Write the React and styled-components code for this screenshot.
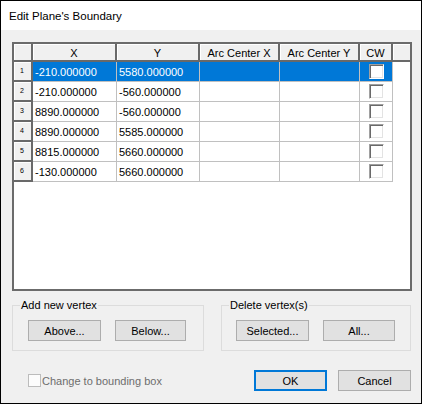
import React from "react";
import styled, { createGlobalStyle, css } from "styled-components";

const Global = createGlobalStyle`
  html, body { margin: 0; padding: 0; background: #fff; }
  * { box-sizing: border-box; }
`;

const FONT = `"Liberation Sans", Arial, sans-serif`;
const DARK = "#696969";

const Window = styled.div`
  width: 422px;
  height: 404px;
  border: 1px solid #000;
  background: #f0f0f0;
  display: flex;
  flex-direction: column;
  font-family: ${FONT};
  color: #000;
`;

const TitleBar = styled.div`
  height: 29px;
  background: #fff;
  display: flex;
  align-items: center;
  padding-left: 8px;
  font-size: 11.5px;
`;

const Body = styled.div`
  flex: 1;
  padding: 12px 0 0 11px;
  display: flex;
  flex-direction: column;
`;

const GridFrame = styled.div`
  width: 400px;
  height: 249px;
  border: 2px solid #6b6b6b;
  background: #fff;
  display: flex;
  flex-direction: column;
`;

const Row = styled.div`
  display: flex;
  height: ${(p) => p.$h}px;
`;

const headerCellBase = css`
  background: #f0f0f0;
  border-right: 2px solid ${DARK};
  border-bottom: 2px solid ${DARK};
  box-shadow: inset 1px 1px 0 #fff;
`;

const HeaderCell = styled.div`
  ${headerCellBase};
  width: ${(p) => p.$w}px;
  height: 18px;
  display: flex;
  align-items: center;
  justify-content: center;
  font-size: 11px;
  padding-top: 1px;
`;

const HeaderFiller = styled.div`
  ${headerCellBase};
  flex: 1;
  height: 18px;
  border-right: none;
`;

const RowHeader = styled.div`
  ${headerCellBase};
  width: 19px;
  height: 20px;
  font-size: 7px;
  line-height: 7px;
  text-align: center;
  padding-top: 5px;
  padding-right: 1px;
`;

const DataCell = styled.div`
  width: ${(p) => p.$w}px;
  height: 20px;
  border-right: 1px solid #c0c0c0;
  border-bottom: 1px solid #c0c0c0;
  background: ${(p) => (p.$sel ? "#0078d7" : "#fff")};
  color: ${(p) => (p.$sel ? "#fff" : "#000")};
  font-size: 11px;
  display: flex;
  align-items: center;
  padding-left: 2px;
  white-space: nowrap;
  overflow: hidden;
`;

const CheckCell = styled(DataCell)`
  justify-content: center;
  padding-left: 0;
`;

const GridCheck = styled.div`
  width: 15px;
  height: 15px;
  background: #fff;
  border-top: 1px solid #a0a0a0;
  border-left: 1px solid #a0a0a0;
  border-right: 1px solid #fff;
  border-bottom: 1px solid #fff;
  box-shadow: inset 1px 1px 0 ${DARK}, inset -1px -1px 0 #e3e3e3;
`;

const Groups = styled.div`
  display: flex;
  gap: 17px;
  margin-top: 14px;
`;

const Group = styled.div`
  position: relative;
  width: ${(p) => p.$w}px;
  border: 1px solid #dcdcdc;
  padding: 14px 0 9px ${(p) => p.$pl}px;
  display: flex;
  gap: 14px;
`;

const GroupLabel = styled.span`
  position: absolute;
  top: -8px;
  left: 7px;
  padding: 0 1px;
  background: #f0f0f0;
  font-size: 11px;
  line-height: 14px;
  white-space: nowrap;
`;

const Button = styled.button`
  width: ${(p) => p.$w || 73}px;
  height: 21px;
  margin: 0;
  padding: 0;
  font-family: ${FONT};
  font-size: 11px;
  color: #000;
  background: #e1e1e1;
  border: 1px solid ${(p) => (p.$default ? "#0078d7" : "#adadad")};
  box-shadow: ${(p) => (p.$default ? "inset 0 0 0 1px #0078d7" : "none")};
`;

const Footer = styled.div`
  display: flex;
  align-items: center;
  margin-top: 19px;
  padding-left: 16px;
  width: 399px;
  gap: 11px;
`;

const CheckLabel = styled.label`
  display: flex;
  align-items: center;
  gap: 1px;
  font-size: 11px;
  color: #6d6d6d;
  margin-right: auto;
`;

const Box = styled.span`
  width: 13px;
  height: 13px;
  border: 1px solid #bcbcbc;
  background: #fcfcfc;
  display: inline-block;
`;

const cols = [
  { label: "X", w: 84 },
  { label: "Y", w: 83 },
  { label: "Arc Center X", w: 80 },
  { label: "Arc Center Y", w: 80 },
];

const rows = [
  ["-210.000000", "5580.000000"],
  ["-210.000000", "-560.000000"],
  ["8890.000000", "-560.000000"],
  ["8890.000000", "5585.000000"],
  ["8815.000000", "5660.000000"],
  ["-130.000000", "5660.000000"],
];

export default function App() {
  return (
    <>
      <Global />
      <Window>
        <TitleBar>Edit Plane's Boundary</TitleBar>
        <Body>
          <GridFrame>
            <Row $h={18}>
              <HeaderCell $w={19} />
              {cols.map((c) => (
                <HeaderCell key={c.label} $w={c.w}>
                  {c.label}
                </HeaderCell>
              ))}
              <HeaderCell $w={33}>CW</HeaderCell>
              <HeaderFiller />
            </Row>
            {rows.map((r, i) => {
              const sel = i === 0;
              return (
                <Row $h={20} key={i}>
                  <RowHeader>{i + 1}</RowHeader>
                  <DataCell $w={84} $sel={sel}>{r[0]}</DataCell>
                  <DataCell $w={83} $sel={sel}>{r[1]}</DataCell>
                  <DataCell $w={80} $sel={sel} />
                  <DataCell $w={80} $sel={sel} />
                  <CheckCell $w={33} $sel={sel}>
                    <GridCheck />
                  </CheckCell>
                </Row>
              );
            })}
          </GridFrame>
          <Groups>
            <Group $w={192} $pl={15}>
              <GroupLabel>Add new vertex</GroupLabel>
              <Button $w={73}>Above...</Button>
              <Button $w={71}>Below...</Button>
            </Group>
            <Group $w={190} $pl={14}>
              <GroupLabel>Delete vertex(s)</GroupLabel>
              <Button $w={73}>Selected...</Button>
              <Button $w={72}>All...</Button>
            </Group>
          </Groups>
          <Footer>
            <CheckLabel>
              <Box />
              Change to bounding box
            </CheckLabel>
            <Button $default>OK</Button>
            <Button>Cancel</Button>
          </Footer>
        </Body>
      </Window>
    </>
  );
}
